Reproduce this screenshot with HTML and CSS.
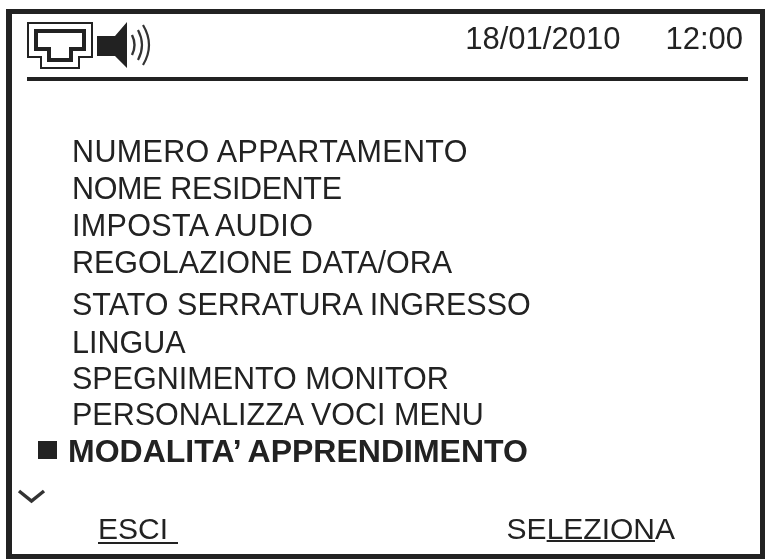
FILE: index.html

```html
<!DOCTYPE html>
<html lang="it">
<head>
  <meta charset="UTF-8">
  <title>Menu monitor</title>
  <link rel="stylesheet" href="styles.css">
</head>
<body>
  <div class="screen">
    <!-- Status bar -->
    <div class="status">
      <svg class="status-icons" width="128" height="50" viewBox="0 0 128 50">
        <path d="M1 1H65V35H52V46H14V35H1Z" fill="none" stroke="#222" stroke-width="2"/>
        <path d="M9 9H57V27H44V38H22V27H9Z" fill="none" stroke="#222" stroke-width="4"/>
        <path d="M70 14H88L100 0V46L88 34H70Z" fill="#222"/>
        <path d="M105 13Q110 23 105 33" fill="none" stroke="#333" stroke-width="2.4"/>
        <path d="M111 8Q119 23 111 38" fill="none" stroke="#333" stroke-width="2.2"/>
        <path d="M116 3Q128 23 116 43" fill="none" stroke="#333" stroke-width="2.2"/>
      </svg>
      <div class="clock">
        <span>18/01/2010</span>
        <span>12:00</span>
      </div>
    </div>

    <!-- Menu items -->
    <ul class="menu">
      <li class="wide">NUMERO APPARTAMENTO</li>
      <li class="narrow">NOME RESIDENTE</li>
      <li class="wide">IMPOSTA AUDIO</li>
      <li>REGOLAZIONE DATA/ORA</li>
      <li class="gap">STATO SERRATURA INGRESSO</li>
      <li class="nudge">LINGUA</li>
      <li class="tight">SPEGNIMENTO MONITOR</li>
      <li class="tight">PERSONALIZZA VOCI MENU</li>
      <li class="active">MODALITA’ APPRENDIMENTO</li>
    </ul>

    <svg class="more" width="30" height="16" viewBox="0 0 30 16">
      <path d="M2 2L14.500 12L27 2" fill="none" stroke="#333" stroke-width="3.500"/>
    </svg>

    <!-- Soft keys -->
    <div class="keys">
      <span class="key-exit">ESCI</span>
      <span class="key-select">SE<u>LEZION</u>A</span>
    </div>
  </div>
</body>
</html>
```

FILE: styles.css

```css
body {
  margin: 0;
  background: #fff;
  color: #222;
  font-family: "Liberation Sans", Arial, sans-serif;
  font-size: 31px;
}

/* the original is a soft scan, so everything gets a slight blur */
.screen {
  box-sizing: border-box;
  width: 759px;
  height: 550px;
  margin: 9px 0 0 6px;
  border: 5px solid #222;
  border-left-width: 6px;
  padding: 8px 12px 0 15px;
  filter: blur(0.4px);
}

.status {
  display: flex;
  justify-content: space-between;
  height: 55px;
  border-bottom: 4px solid #222;
}

.clock {
  display: flex;
  gap: 45px;
  padding-right: 5px;
  line-height: 34px;
}

.menu {
  list-style: none;
  margin: 52px 0 0;
  padding: 0 0 0 45px;
  font-size: 30.5px;
}

.menu li {
  line-height: 37px;
}

.menu .wide {
  letter-spacing: 0.35px;
}

.menu .narrow {
  letter-spacing: -0.35px;
}

.menu .gap {
  margin-top: 5px;
}

.menu .nudge {
  margin-top: 1px;
}

.menu .tight {
  margin-top: -1px;
}

.menu .active {
  margin-left: -4px;
  font-size: 32px;
  font-weight: bold;
  position: relative;
}

/* square marker in front of the selected row */
.menu .active::before {
  content: "";
  position: absolute;
  left: -30px;
  top: 8px;
  width: 19px;
  height: 18px;
  background: #222;
}

.more {
  display: block;
  margin: 19px 0 0 -10px;
}

.keys {
  display: flex;
  justify-content: space-between;
  padding: 8px 73px 0 71px;
  font-size: 30px;
  line-height: 32px;
}

.key-exit {
  border-bottom: 2px solid #222;
  height: 29px;
  padding-right: 10px;
}

.key-select u {
  text-decoration-thickness: 2px;
  text-underline-offset: 1px;
}
```
